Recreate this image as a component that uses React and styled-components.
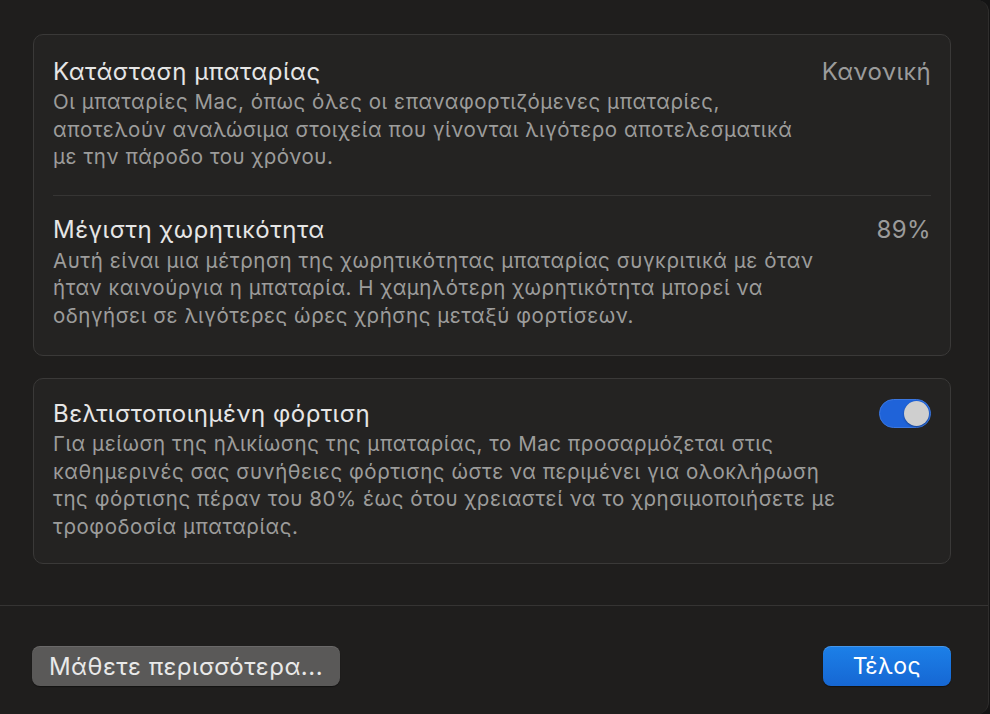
import React, { useState } from 'react';
import styled, { createGlobalStyle } from 'styled-components';

const GlobalStyle = createGlobalStyle`
  html, body {
    margin: 0;
    padding: 0;
    background: #141414;
  }
  body {
    font-family: Inter, "Noto Sans", "Liberation Sans", sans-serif;
    -webkit-font-smoothing: antialiased;
  }
`;

// The settings sheet window
const Sheet = styled.div`
  width: 989px;
  height: 714px;
  box-sizing: border-box;
  background: #1f1e1d;
  border-right: 1px solid #2f2e2d;
  border-top-right-radius: 12px;
  border-bottom-right-radius: 12px;
  display: flex;
  flex-direction: column;
`;

const Content = styled.div`
  padding: 34px 37px 0 33px;
  display: flex;
  flex-direction: column;
  gap: 22px;
`;

// Rounded group box
const Group = styled.section`
  background: #242322;
  border: 1px solid #3a3938;
  border-radius: 10px;
  padding: 0 19px;
`;

const Row = styled.div`
  padding: ${(p) => p.$pad};
  border-top: ${(p) => (p.$divided ? '1px solid #363534' : 'none')};
`;

const TitleLine = styled.div`
  display: flex;
  align-items: center;
  justify-content: space-between;
  height: 34px;
`;

const Title = styled.div`
  font-size: 24px;
  letter-spacing: 0.5px;
  color: #e6e6e6;
`;

const Value = styled.div`
  font-size: 24px;
  letter-spacing: 0.4px;
  color: #9b9b9b;
`;

const Description = styled.p`
  margin: 0;
  font-size: 20.5px;
  letter-spacing: 0.55px;
  line-height: 27.5px;
  color: #9c9c9b;
  white-space: nowrap;
`;

// Switch control
const Switch = styled.button`
  width: 52px;
  height: 29px;
  border-radius: 15px;
  border: 1px solid ${(p) => (p.$on ? '#3b77e0' : '#4a4948')};
  background: ${(p) => (p.$on ? '#1f63d9' : '#3a3938')};
  padding: 0 1px;
  display: flex;
  align-items: center;
  justify-content: ${(p) => (p.$on ? 'flex-end' : 'flex-start')};
  cursor: pointer;
  box-sizing: border-box;
`;

const Knob = styled.span`
  width: 25px;
  height: 25px;
  border-radius: 50%;
  background: #cfcfcf;
  box-shadow: 0 1px 2px rgba(0, 0, 0, 0.35);
`;

const Footer = styled.div`
  margin-top: auto;
  border-top: 1px solid #353433;
  height: 109px;
  box-sizing: border-box;
  padding: 40px 37px 0 32px;
  display: flex;
  justify-content: space-between;
  align-items: flex-start;
`;

const Button = styled.button`
  height: 40px;
  width: ${(p) => (p.$primary ? '128px' : '308px')};
  padding: 0;
  border-radius: 8px;
  border: none;
  font-family: inherit;
  font-size: ${(p) => (p.$primary ? '23px' : '24px')};
  letter-spacing: 0.5px;
  color: ${(p) => (p.$primary ? '#ffffff' : '#e9e9e9')};
  background: ${(p) =>
    p.$primary ? 'linear-gradient(#1c80e8, #1667d3)' : '#5a5958'};
  box-shadow: ${(p) =>
    p.$primary
      ? 'inset 0 1px 0 rgba(255,255,255,0.18), 0 1px 1px rgba(0,0,0,0.4)'
      : 'inset 0 1px 0 rgba(255,255,255,0.1), 0 1px 1px rgba(0,0,0,0.4)'};
  cursor: pointer;
`;

function App() {
  const [optimized, setOptimized] = useState(true);

  return (
    <>
      <GlobalStyle />
      <Sheet>
        <Content>
          <Group>
            <Row $pad="19px 0 24px">
              <TitleLine>
                <Title>Κατάσταση μπαταρίας</Title>
                <Value>Κανονική</Value>
              </TitleLine>
              <Description>
                Οι μπαταρίες Mac, όπως όλες οι επαναφορτιζόμενες μπαταρίες,
                <br />
                αποτελούν αναλώσιμα στοιχεία που γίνονται λιγότερο αποτελεσματικά
                <br />
                με την πάροδο του χρόνου.
              </Description>
            </Row>
            <Row $divided $pad="17px 0 26px">
              <TitleLine>
                <Title>Μέγιστη χωρητικότητα</Title>
                <Value>89%</Value>
              </TitleLine>
              <Description>
                Αυτή είναι μια μέτρηση της χωρητικότητας μπαταρίας συγκριτικά με όταν
                <br />
                ήταν καινούργια η μπαταρία. Η χαμηλότερη χωρητικότητα μπορεί να
                <br />
                οδηγήσει σε λιγότερες ώρες χρήσης μεταξύ φορτίσεων.
              </Description>
            </Row>
          </Group>

          <Group>
            <Row $pad="17px 0 23px">
              <TitleLine>
                <Title>Βελτιστοποιημένη φόρτιση</Title>
                <Switch $on={optimized} onClick={() => setOptimized(!optimized)}>
                  <Knob />
                </Switch>
              </TitleLine>
              <Description>
                Για μείωση της ηλικίωσης της μπαταρίας, το Mac προσαρμόζεται στις
                <br />
                καθημερινές σας συνήθειες φόρτισης ώστε να περιμένει για ολοκλήρωση
                <br />
                της φόρτισης πέραν του 80% έως ότου χρειαστεί να το χρησιμοποιήσετε με
                <br />
                τροφοδοσία μπαταρίας.
              </Description>
            </Row>
          </Group>
        </Content>

        <Footer>
          <Button>Μάθετε περισσότερα...</Button>
          <Button $primary>Τέλος</Button>
        </Footer>
      </Sheet>
    </>
  );
}

export default App;
